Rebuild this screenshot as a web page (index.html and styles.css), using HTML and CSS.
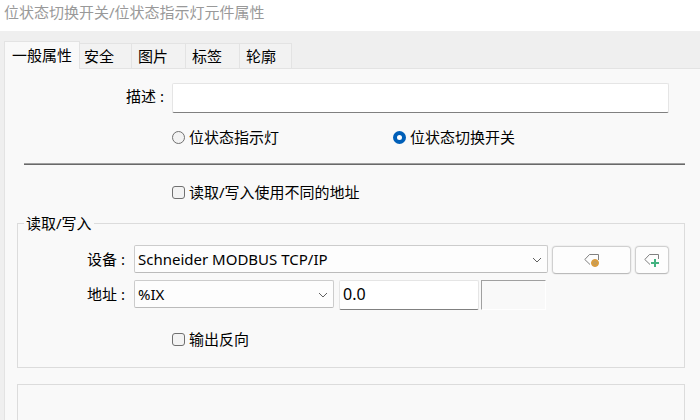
FILE: index.html
```html
<!DOCTYPE html>
<html lang="zh-CN">
<head>
    <meta charset="UTF-8">
    <meta name="viewport" content="width=device-width, initial-scale=1.0">
    <title>位状态切换开关/位状态指示灯元件属性</title>
    <link rel="stylesheet" href="styles.css">
</head>
<body>
    <header class="title-bar">位状态切换开关/位状态指示灯元件属性</header>
    <main class="dialog">
        <div class="tabs" role="tablist">
            <button type="button" class="tab active" role="tab" aria-selected="true">一般属性</button>
            <button type="button" class="tab" role="tab">安全</button>
            <button type="button" class="tab" role="tab">图片</button>
            <button type="button" class="tab" role="tab">标签</button>
            <button type="button" class="tab" role="tab">轮廓</button>
        </div>
        <form class="panel">
            <div class="description">
                <label for="description">描述 :</label>
                <input type="text" id="description" class="text-box">
            </div>
            <div class="modes">
                <label class="option"><input type="radio" name="mode">位状态指示灯</label>
                <label class="option"><input type="radio" name="mode" checked>位状态切换开关</label>
            </div>
            <hr class="divider">
            <div class="indent">
                <label class="option"><input type="checkbox">读取/写入使用不同的地址</label>
            </div>
            <fieldset class="group">
                <legend>读取/写入</legend>
                <div class="row">
                    <label for="device">设备 :</label>
                    <div class="select device">
                        <select id="device">
                            <option>Schneider MODBUS TCP/IP</option>
                        </select>
                        <svg class="arrow" viewBox="0 0 10 6"><path d="M1 1l4 4 4-4"/></svg>
                    </div>
                    <button type="button" class="icon-button wide" aria-label="标签设置">
                        <svg class="icon" viewBox="0 0 16 14">
                            <path class="outline" d="M6 11.500L.8 6.500 5.500 1.500H14.500V7"/>
                            <circle class="gear" cx="11" cy="10" r="3.500"/>
                            <circle class="gear-hole" cx="11" cy="10" r="1.500"/>
                        </svg>
                    </button>
                    <button type="button" class="icon-button" aria-label="新增标签">
                        <svg class="icon" viewBox="0 0 16 14">
                            <path class="outline" d="M6 11.500L.8 6.500 5.500 1.500H14.500V6"/>
                            <path class="plus" d="M11 6v8M7 10h8"/>
                        </svg>
                    </button>
                </div>
                <div class="row">
                    <label for="address">地址 :</label>
                    <div class="select address">
                        <select id="address">
                            <option>%IX</option>
                        </select>
                        <svg class="arrow" viewBox="0 0 10 6"><path d="M1 1l4 4 4-4"/></svg>
                    </div>
                    <input type="text" class="text-box offset" value="0.0" aria-label="地址">
                    <div class="status"></div>
                </div>
                <div class="invert">
                    <label class="option"><input type="checkbox">输出反向</label>
                </div>
            </fieldset>
            <fieldset class="group next"></fieldset>
        </form>
    </main>
</body>
</html>
```

FILE: styles.css
```css
*{
    margin: 0;
    padding: 0;
    box-sizing: border-box;
}
body{
    min-height: 100vh;
    display: flex;
    flex-direction: column;
    background-color: #efefef;
    color: #000;
    font: 15px/20px "Noto Sans", "Noto Sans CJK SC", sans-serif;
}
button, input, select{
    font: inherit;
    color: inherit;
}
.title-bar{
    padding: 2px 4px 9px;
    background-color: white;
    color: #999;
}
.dialog{
    flex: 1;
    display: flex;
    flex-direction: column;
    padding: 10px 0 0 4px;
}
.tabs{
    display: flex;
    align-items: flex-end;
}
.tab{
    height: 25px;
    padding: 0 17px 0 6px;
    border: 1px solid #e3e3e3;
    border-left: none;
    border-bottom: none;
    background-color: #f2f2f2;
}
.tab:last-child{
    padding-right: 15px;
}
.tab.active{
    height: 28px;
    margin-bottom: -1px;
    padding: 0 7px 2px;
    border-left: 1px solid #e3e3e3;
    background-color: #f9f9f9;
    position: relative;
}
.tab.active + .tab{
    padding-left: 4px;
}
.panel{
    flex: 1;
    display: flex;
    flex-direction: column;
    padding: 15px 15px 0 12px;
    border-left: 1px solid #e3e3e3;
    background-color: #f9f9f9;
    box-shadow: inset 0 1px #e3e3e3;
}
.text-box{
    height: 30px;
    padding: 0 3px 2px;
    border: 1px solid #e5e5e5;
    border-bottom-color: #808080;
    border-radius: 2px;
    background-color: white;
    font-size: 16px;
}
.description{
    display: flex;
    align-items: center;
    gap: 8px;
    padding-right: 16px;
}
.description label{
    width: 147px;
    padding-bottom: 4px;
    text-align: right;
}
.description .text-box{
    flex: 1;
    min-width: 0;
}
.modes{
    display: grid;
    grid-template-columns: 221px 1fr;
    padding: 14px 0 16px 155px;
}
.option{
    display: inline-flex;
    align-items: center;
    gap: 4px;
}
.option input{
    appearance: none;
    width: 13px;
    height: 13px;
    border: 1px solid #707070;
    border-radius: 3px;
    background-color: #f3f3f3;
}
.option input[type="radio"]{
    border-radius: 50%;
}
.option input[type="radio"]:checked{
    border: 4px solid #005fb8;
    background-color: white;
}
.option input[type="checkbox"]:checked{
    background-color: #005fb8;
}
.divider{
    height: 2px;
    margin-left: 7px;
    border: none;
    border-top: 1px solid #a0a0a0;
    background-color: #696969;
}
.indent{
    display: flex;
    padding: 17px 0 11px 155px;
}
.group{
    min-width: 0;
    padding: 12px 15px 18px 16px;
    border: 1px solid #dcdcdc;
}
.group legend{
    margin-left: -10px;
    padding: 0 2px;
}
.row{
    display: flex;
    align-items: flex-start;
    margin-bottom: 6px;
}
.row > label{
    width: 91px;
    padding-top: 4px;
    text-align: right;
}
.select{
    position: relative;
    height: 28px;
    margin-left: 9px;
}
.select select{
    appearance: none;
    width: 100%;
    height: 100%;
    padding: 0 24px 0 3px;
    border: 1px solid #ccc;
    border-bottom-color: #bbb;
    border-radius: 2px;
    background-color: #fdfdfd;
}
.arrow{
    position: absolute;
    top: 12px;
    right: 6px;
    width: 10px;
    height: 6px;
    fill: none;
    stroke: #606060;
    pointer-events: none;
}
.device{
    flex: 1;
}
.address{
    width: 200px;
}
.icon-button{
    display: flex;
    align-items: center;
    justify-content: center;
    width: 34px;
    height: 28px;
    margin: 1px 0 0 4px;
    border: 1px solid #d0d0d0;
    border-bottom-color: #bbb;
    border-radius: 4px;
    background-color: #fdfdfd;
    box-shadow: 0 0 0 1px #f0f0f0;
}
.icon-button.wide{
    width: 79px;
}
.icon{
    flex: none;
    width: 16px;
    height: 14px;
    fill: none;
}
.outline{
    stroke: #808080;
}
.gear{
    fill: #dfa03c;
    stroke: #d59a40;
}
.gear-hole{
    stroke: #b99a68;
}
.plus{
    stroke: #42b280;
    stroke-width: 2;
}
.offset{
    width: 140px;
    margin-left: 5px;
}
.status{
    width: 65px;
    height: 30px;
    margin-left: 2px;
    border: 1px solid white;
    border-top-color: #a0a0a0;
    border-left-color: #a0a0a0;
}
.invert{
    display: flex;
    padding: 13px 0 0 138px;
}
.next{
    flex: 1;
    margin-top: 16px;
    border-bottom: none;
}
```
